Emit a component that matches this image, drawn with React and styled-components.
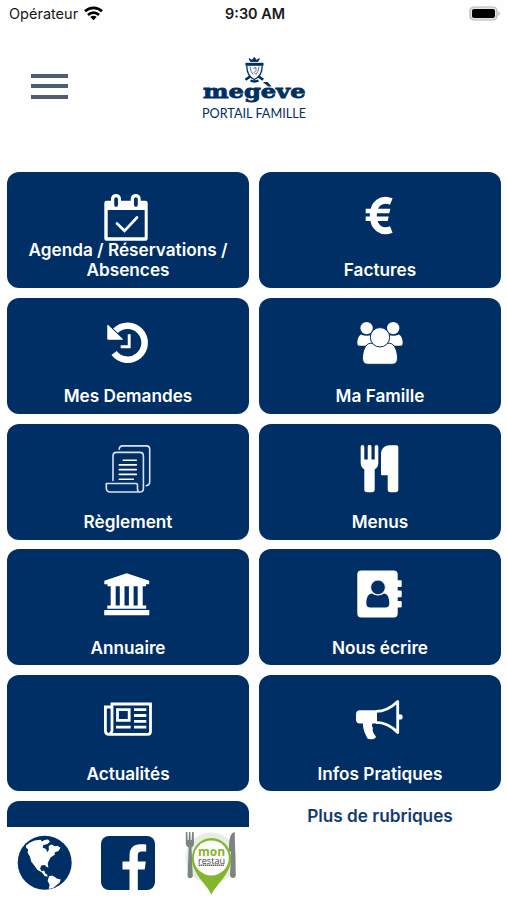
import styled, { createGlobalStyle } from 'styled-components';

const NAVY = '#002f66';

const GlobalStyle = createGlobalStyle`
  body {
    margin: 0;
    background: #fff;
    font-family: Inter, 'Liberation Sans', sans-serif;
  }
`;

const Screen = styled.div`
  display: flex;
  flex-direction: column;
  width: 507px;
  height: 900px;
  overflow: hidden;
  background: #fefefe;
`;

const StatusBar = styled.div`
  display: grid;
  grid-template-columns: 1fr auto 1fr;
  align-items: center;
  height: 28px;
  padding: 0 6px 2px 9px;
  box-sizing: border-box;
  font-size: 14.5px;
  color: #171717;
`;

const Carrier = styled.div`
  display: flex;
  align-items: center;
  gap: 6px;
`;

const Clock = styled.div`
  font-weight: 600;
  font-size: 14.4px;
`;

const Battery = styled.svg`
  justify-self: end;
`;

const Header = styled.header`
  display: grid;
  grid-template-columns: 1fr auto 1fr;
  align-items: start;
  height: 144px;
  padding: 28px 31px 0;
  box-sizing: border-box;
`;

const MenuButton = styled.button`
  display: flex;
  flex-direction: column;
  gap: 6.2px;
  width: 37px;
  margin-top: 18.3px;
  padding: 0;
  border: 0;
  background: none;
`;

const MenuBar = styled.span`
  height: 4px;
  background: #4f5d74;
`;

const Content = styled.main`
  height: 655px;
  overflow: hidden;
`;

const Grid = styled.div`
  display: grid;
  grid-template-columns: 242px 242px;
  grid-auto-rows: 116px;
  gap: 9.8px 10px;
  padding-left: 7px;
`;

const Tile = styled.div`
  display: flex;
  flex-direction: column;
  align-items: center;
  justify-content: space-between;
  box-sizing: border-box;
  padding: 21px 16px 7px;
  border-radius: 12px;
  background: ${NAVY};
  color: #fff;
`;

const Icon = styled.svg`
  flex: none;
  width: 48px;
  height: 48px;
  margin-bottom: -3px;
`;

const Label = styled.div`
  font-size: 17.2px;
  font-weight: 600;
  line-height: 20.6px;
  text-align: center;
`;

const More = styled.div`
  display: flex;
  flex-direction: column;
  align-items: center;
  padding-top: 5.5px;
  color: #123a72;
`;

const Footer = styled.footer`
  display: flex;
  align-items: center;
  height: 71px;
  padding-left: 17px;
  gap: 29px;
`;

const Logo = () => (
  <svg width="112" height="68" viewBox="198 56 112 68">
    <g fill="none" stroke={NAVY}>
      <path d="M249 58.5l1.500 3h7.500l1.500-3-3 1.800-2.200-3-2.200 3z" fill={NAVY} strokeWidth=".8" />
      <path d="M245.500 64.300h18" strokeWidth="3" />
      <path d="M246.800 66c0 7 1.700 11 7.500 13.500 5.800-2.500 7.900-6.500 7.900-13.500" strokeWidth="1.300" />
      <path d="M250 66.500c.5 4 1.500 6 3 8M259 66.500c-.5 4-1.500 6-3 8M253 68.500l3-1v3l-2 2 2 2" strokeWidth="1" opacity=".65" />
      <path d="M245.500 79.800l5-3.500M263.200 79.800l-5-3.500" strokeWidth="2.600" />
      <path d="M250.500 80.700q4 1.500 8 0" strokeWidth="2.500" />
    </g>
    <text
      x="203"
      y="97.700"
      fill={NAVY}
      stroke={NAVY}
      strokeWidth=".8"
      fontFamily="'DejaVu Serif', serif"
      fontWeight="700"
      fontSize="19"
      textLength="102.500"
      lengthAdjust="spacingAndGlyphs"
    >
      megève
    </text>
    <text
      x="202"
      y="117.700"
      fill={NAVY}
      fontFamily="Lato, sans-serif"
      fontSize="14.300"
      textLength="104"
      lengthAdjust="spacingAndGlyphs"
    >
      PORTAIL FAMILLE
    </text>
  </svg>
);

const AgendaIcon = () => (
  <Icon viewBox="0 0 48 48" fill="none">
    <path fill="#fff" fillRule="evenodd" d="M2.500 7.700H7V5.500a5 4.500 0 0 1 10 0v2.200h9.700V5.500a5 4.500 0 0 1 10 0v2.200h4.800a2.200 2.200 0 0 1 2.200 2.200v35.600a2.200 2.200 0 0 1-2.200 2.200h-39a2.200 2.200 0 0 1-2.200-2.200V9.900a2.200 2.200 0 0 1 2.200-2.200zM3.700 17v27.300h37V17z" />
    <path stroke={NAVY} strokeWidth="3.700" strokeLinecap="round" d="M12.100 6v6M31.900 6v6" />
    <path stroke="#fff" strokeWidth="2.700" strokeLinecap="round" d="M13 30.500l7.500 7.300L33 24.500" />
  </Icon>
);

const EuroIcon = () => (
  <Icon viewBox="0 0 48 48" fill="none" stroke="#fff">
    <path strokeWidth="7" d="M35.300 8.500C25.500 4.600 17.300 10.500 17.300 22.500S25.500 40.400 35.300 36.500" />
    <path fill="#fff" stroke="none" d="M9.700 15.700h24.600l-1 4.600H9.700zM9.700 23.400h23l-1 4.600h-22z" />
  </Icon>
);

const HistoryIcon = () => (
  <Icon viewBox="0 0 48 48" fill="none" stroke="#fff">
    <path strokeWidth="6.600" d="M10.100 34A17 17 0 1 0 11.500 11.800" />
    <path fill="#fff" strokeWidth="1" strokeLinejoin="round" d="M3.800 6.200v14h14.700z" />
    <path strokeWidth="2.900" d="M25.200 15.300v12.400h-8.500" />
  </Icon>
);

const FamilyIcon = () => (
  <Icon viewBox="0 0 48 48" fill="#fff">
    <circle cx="10.600" cy="9.100" r="6.200" />
    <circle cx="37.200" cy="9.100" r="6.200" />
    <path d="M5 15.500q6 2.500 11 0v11.300H3.500q-2.200 0-2.200-2.500c0-4 1-7.300 3.700-8.800zM43 15.500q-6 2.500-11 0v11.300h12.500q2.200 0 2.200-2.500c0-4-1-7.300-3.700-8.800z" />
    <path stroke={NAVY} d="M14.500 24.300h19c5 0 8 7.500 8 15.200q0 5.800-5.500 5.800H12q-5.500 0-5.500-5.800c0-7.700 3-15.200 8-15.200z" />
    <circle cx="24" cy="18.300" r="9.700" stroke={NAVY} />
  </Icon>
);

const RulesIcon = () => (
  <Icon viewBox="0 0 48 48" fill="none" stroke="#d9e2f2" strokeWidth="1.600" strokeLinecap="round" strokeLinejoin="round">
    <path d="M15.200 4.300q0-3.400 3.500-3.400h23.600q3.400 0 3.400 3.400v32.500q0 3.300-3.500 3.900" />
    <path d="M9 35.500V10.900q0-3.500 3.500-3.500h23.300q3.600 0 3.600 3.500v32.500q0 3.600-3.500 3.600H6.300q-4 0-4-4v-4.500H32q1.500 0 1.500 2v3q0 3.500 2.400 3.500" />
    <path stroke="#fff" d="M19.300 15.300h13M15.300 19.900h17M15.300 24.600h17M15.300 29.400h17M15.300 34.200h14" />
  </Icon>
);

const MenusIcon = () => (
  <Icon viewBox="0 0 48 48" fill="#fff">
    <path d="M4.700 1.800a1.800 1.800 0 0 1 3.600 0v12.700h3.400V1.800a1.900 1.900 0 0 1 3.800 0v12.700h3.200V1.800a1.800 1.800 0 0 1 3.600 0V18c0 3-1.300 5-3.600 6.300v20.200a2.800 2.800 0 0 1-2.800 2.800h-4.800a2.800 2.800 0 0 1-2.800-2.800V24.300C6 23 4.700 21 4.700 18z" />
    <path d="M33.500.3h7a1.800 1.800 0 0 1 1.800 1.800v42.400a2.800 2.800 0 0 1-2.800 2.800h-5a2.800 2.800 0 0 1-2.800-2.800V30.300h-5.700a1 1 0 0 1-1-1V9c0-5 3.500-8.700 8.500-8.700z" />
  </Icon>
);

const DirectoryIcon = () => (
  <Icon viewBox="0 0 48 48" fill="#fff">
    <path d="M22.700 3.200L45.200 10.800v3.500H42v2H3.500v-2H.3v-3.500z" />
    <path d="M6.700 16h5v20h-5zM15.800 16h4.700v20h-4.700zM24.900 16h4.700v20h-4.700zM33.700 16h5v20h-5zM3.300 35.600h38.900v3.100H3.300z" />
    <rect x=".2" y="40" width="45.100" height="5.300" rx=".6" />
  </Icon>
);

const ContactIcon = () => (
  <Icon viewBox="0 0 48 48" fill="#fff">
    <rect x="1.300" y=".6" width="40.400" height="47" rx="4" />
    <path d="M41 10.300h3.700a1 1 0 0 1 1 1V16a1 1 0 0 1-1 1H41zM41 20.600h3.700a1 1 0 0 1 1 1v4.700a1 1 0 0 1-1 1H41zM41 31h3.700a1 1 0 0 1 1 1v4.600a1 1 0 0 1-1 1H41z" />
    <path fill={NAVY} d="M16 23.500q6 4.200 12 0c3.800.3 5.300 4.500 5.300 10q0 4-4 4h-15q-4 0-4-4c0-5.500 1.700-9.700 5.700-10z" />
    <circle cx="22" cy="17.400" r="7.300" fill={NAVY} stroke="#fff" strokeWidth=".8" />
  </Icon>
);

const NewsIcon = () => (
  <Icon viewBox="0 0 48 48" fill="none" stroke="#fff" strokeWidth="2.800">
    <path d="M8 34.500V8h38.500v27.500q0 2.800-2.800 2.800H5q-3.600 0-3.600-3.600V11H8M8 34q0 4-3 4" />
    <path d="M13.500 13.700h11.700v10.600H13.500zM30 13.600h12.300M30 19.500h12.300M30 25.300h12.300M30 31.200h12.300M12 31.200h14.700" />
  </Icon>
);

const InfosIcon = () => (
  <Icon viewBox="0 0 48 48" fill="#fff">
    <path d="M4 14.200h17v13.200H4q-4 0-4-4v-5.200q0-4 4-4z" />
    <path fill="none" stroke="#fff" strokeWidth="2.800" strokeLinejoin="round" d="M20 15.400C29 15.400 36 11 41.700 5.500v31C36 30.500 29 26.400 20 26.400" />
    <circle cx="44" cy="20.900" r="2.700" />
    <path d="M7 27h9.500c-.8 2-.8 3.600.4 4.600-.9 3 .4 6 2.800 8.700.4.800 0 1.500-.7 1.900-2 1.300-5.700 1.400-7.500.3-2.200-4.500-5-9.500-4.500-15.500z" />
  </Icon>
);

const Globe = () => (
  <svg width="55" height="55" viewBox="17 835 55 55">
    <circle cx="44.700" cy="862.700" r="27" fill={NAVY} />
    <path
      fill="#fff"
      d="M26 845.500l4-3 4.500-2 6-.8 1.500 1.800 2.500-1.500 3.500-.5 2 2.300-2.500 2.200-4 1-1 2.500 3.500 1.500 1.300 3.300 1.600-2.600-.2-3.700 2.800-1.400 3.500 1.700 2.500-.6 3 2-2 3.200-4 1.700.5 1.900-4.500 3-1.800 3.500-1 2.500.7 4-1.800-.5-1.700-2-3.600.6-1.200 3 1.500 2.600 2.700-.7.800 2.700 2 1.200.5 2.300-3-.6-2.600-3.500-4.700-2.800-3-4.300-3-3.800-1.500-5.500-2.200-3.500.5-3.500-2-1.200z"
    />
    <path fill="#fff" d="M49 876.300l3-.8 3.200 1.700 1.500 1.300 4 1-1 3-3 2.500-3.200 2.800-4.700 1.200.8-4.500-2-3.500z" />
  </svg>
);

const Facebook = () => (
  <svg width="54" height="54" viewBox="0 0 54 54">
    <rect width="54" height="54" rx="8" fill={NAVY} />
    <path fill="#fff" d="M28.500 54V33.500h-7v-8h7v-6.200c0-7.300 4.300-11.100 10.800-11.100 2.900 0 5.200.2 5.900.3v7.100h-4.100c-3.400 0-4.300 1.600-4.300 4v5.900h8l-1.100 8h-6.900V54z" />
  </svg>
);

const MonRestau = () => (
  <svg width="54" height="66" viewBox="185 830 54 66">
    <circle cx="212" cy="858" r="25.500" fill="#e8ece2" />
    <g fill="#7d8583">
      <path d="M186.800 832h1.500l.4 8h1l.2-8h1.500l.3 8h1l.4-8h1.600l.3 11c0 2.700-1.300 4-2.500 4.500l1.300 28c.2 3.500-5.500 3.500-5.300 0l1.200-28c-1.700-.7-2.900-2-2.900-4.500z" />
      <path d="M235.700 832c-4 .6-6 6-5.700 18.500l2 1.500-1 23c0 4 6 4 5.800 0z" />
    </g>
    <path fill="#83b62d" d="M212.500 895c-3-9-19.600-21-19.600-36.500a19.600 20.500 0 0 1 39.200 0c0 15.500-16.600 27.500-19.600 36.500z" />
    <circle cx="212.300" cy="858" r="17.500" fill="#fefefe" />
    <text
      x="199"
      y="855.500"
      fill="#83b62d"
      fontSize="12"
      fontWeight="700"
      fontFamily="'Open Sans', sans-serif"
      textLength="27"
      lengthAdjust="spacingAndGlyphs"
    >
      mon
    </text>
    <text
      x="199"
      y="863.500"
      fill="#444"
      fontSize="9"
      fontFamily="'Open Sans', sans-serif"
      textLength="27"
      lengthAdjust="spacingAndGlyphs"
    >
      restau
    </text>
    <path stroke="#666" strokeWidth="1.500" strokeDasharray="1.500 .5" d="M199.500 865.300h26" />
  </svg>
);

const tiles = [
  { label: 'Agenda / Réservations / Absences', icon: AgendaIcon },
  { label: 'Factures', icon: EuroIcon },
  { label: 'Mes Demandes', icon: HistoryIcon },
  { label: 'Ma Famille', icon: FamilyIcon },
  { label: 'Règlement', icon: RulesIcon },
  { label: 'Menus', icon: MenusIcon },
  { label: 'Annuaire', icon: DirectoryIcon },
  { label: 'Nous écrire', icon: ContactIcon },
  { label: 'Actualités', icon: NewsIcon },
  { label: 'Infos Pratiques', icon: InfosIcon },
];

const App = () => (
  <>
    <GlobalStyle />
    <Screen>
      <StatusBar>
        <Carrier>
          Opérateur
          <svg width="19" height="15" viewBox="0 0 19 15" fill="none" stroke="#000" strokeWidth="2.700">
            <path d="M1 5.300a12.200 12.200 0 0 1 17 0M4 8.900a8 8 0 0 1 11 0" />
            <path d="M9.500 14.300l-3.200-3.200a4.600 4.600 0 0 1 6.400 0z" fill="#000" stroke="none" />
          </svg>
        </Carrier>
        <Clock>9:30 AM</Clock>
        <Battery width="32" height="15" viewBox="0 0 32 15">
          <rect x="1" y="1" width="27" height="13" rx="4" fill="#e4e4e4" stroke="#b5b5b5" strokeWidth="1.200" />
          <rect x="3" y="3" width="23" height="9" rx="2" fill="#000" />
          <path d="M29.300 5q3 2.500 0 5z" fill="#b5b5b5" />
        </Battery>
      </StatusBar>
      <Header>
        <MenuButton aria-label="Menu">
          <MenuBar />
          <MenuBar />
          <MenuBar />
        </MenuButton>
        <Logo />
      </Header>
      <Content>
        <Grid>
          {tiles.map(({ label, icon: TileIcon }) => (
            <Tile key={label}>
              <TileIcon />
              <Label>{label}</Label>
            </Tile>
          ))}
          <Tile />
          <More>
            <Label>Plus de rubriques</Label>
            <svg width="8" height="4" viewBox="0 0 8 4" fill="none" stroke="#c3c6cb">
              <path d="M1 2q3-2 6 0" />
            </svg>
          </More>
        </Grid>
      </Content>
      <Footer>
        <Globe />
        <Facebook />
        <MonRestau />
      </Footer>
    </Screen>
  </>
);

export default App;
